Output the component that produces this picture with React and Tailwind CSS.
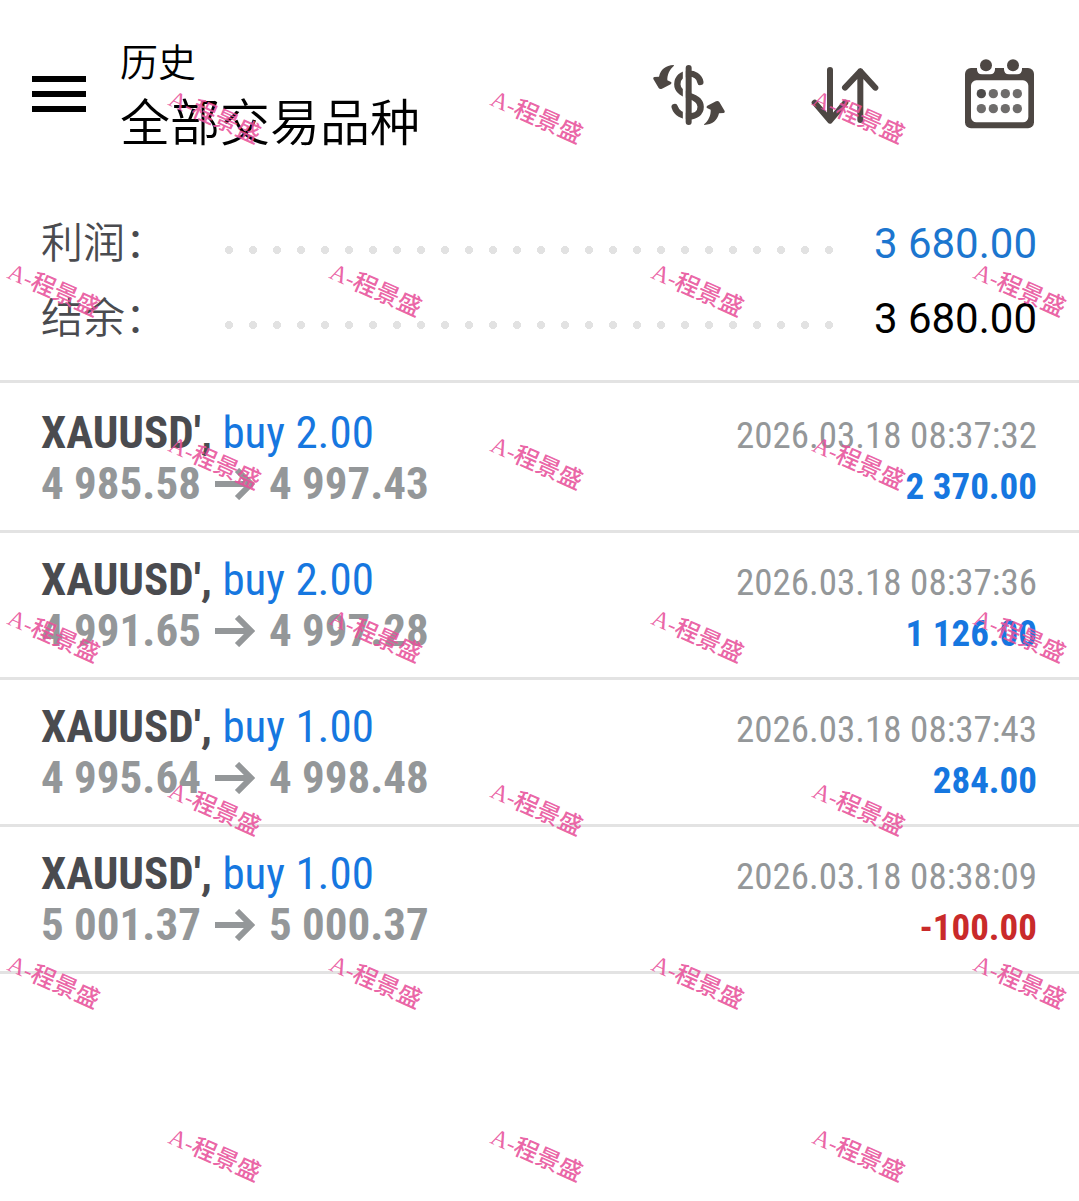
import React from "react";

const summary = [
    { label: "利润", value: "3 680.00", color: "text-[#1c76cf]" },
    { label: "结余", value: "3 680.00", color: "text-black" },
];

const deals = [
    { symbol: "XAUUSD'", side: "buy 2.00", open: "4 985.58", close: "4 997.43", time: "2026.03.18 08:37:32", profit: "2 370.00" },
    { symbol: "XAUUSD'", side: "buy 2.00", open: "4 991.65", close: "4 997.28", time: "2026.03.18 08:37:36", profit: "1 126.00" },
    { symbol: "XAUUSD'", side: "buy 1.00", open: "4 995.64", close: "4 998.48", time: "2026.03.18 08:37:43", profit: "284.00" },
    { symbol: "XAUUSD'", side: "buy 1.00", open: "5 001.37", close: "5 000.37", time: "2026.03.18 08:38:09", profit: "-100.00" },
];

// number of stamps in each row of the watermark
const watermarkRows = [3, 4, 3, 4, 3, 4, 3];

const CurrencyIcon = () => (
    <svg viewBox="6 -12 240 240" className="size-20" fill="none">
        <path d="M157 72 C154 54 138 47 123 47 C102 47 88 60 88 79 C88 98 104 107 123 113 C143 119 158 128 158 146 C158 165 142 175 123 175 C104 175 86 166 80 147" stroke="#4d4743" strokeWidth="19" strokeLinecap="round" />
        <path d="M109 30V190" stroke="#fff" strokeWidth="9" />
        <path d="M122 30V192" stroke="#4d4743" strokeWidth="18" strokeLinecap="round" />
        <path id="swap" d="M77 21 C53 22 38 34 33 56 L19 57 Q14 58 16 63 L32 90 Q36 95 42 92 L68 79 Q73 75 69 72 L58 67 C57 50 65 34 78 23Z" fill="#4d4743" />
        <use href="#swap" transform="rotate(180 123 111)" />
    </svg>
);

const SortIcon = () => (
    <svg viewBox="0 0 240 240" className="size-20" fill="none" stroke="#4d4743" strokeWidth="18" strokeLinecap="round" strokeLinejoin="round">
        <path d="M75 48V199M29 146L75 200L121 146" />
        <path d="M166 198V52M120 101L166 52L211 101" />
    </svg>
);

const CalendarIcon = () => (
    <svg viewBox="0 0 240 240" className="size-20">
        <rect x="15" y="42" width="207" height="181" rx="18" fill="#4d4743" />
        <rect x="33" y="79" width="172" height="126" rx="16" fill="#fff" />
        <path d="M51 34h54v12q0 15-15 15h-24q-15 0-15-15zM132 34h54v12q0 15-15 15h-24q-15 0-15-15z" fill="#fff" />
        <circle cx="78" cy="34" r="18" fill="#4d4743" />
        <circle cx="159" cy="34" r="18" fill="#4d4743" />
        {[119, 164].map((y) =>
            [64, 100, 136, 172].map((x) => (
                <circle key={`${x}-${y}`} cx={x} cy={y} r="14" fill={x === 64 && y === 119 ? "#4d4b4a" : "#6e6c6b"} />
            ))
        )}
    </svg>
);

const PriceArrow = () => (
    <svg viewBox="0 0 40 32" className="w-10 h-8" fill="none" stroke="currentColor" strokeWidth="6">
        <path d="M0 16H36M22 2L36 16L22 30" />
    </svg>
);

const Header = () => (
    <header className="flex items-center justify-between pl-8 pr-[39px] pt-[30px]">
        <div className="flex items-center gap-[34px]">
            <button aria-label="菜单" className="flex flex-col gap-[9px]">
                <span className="w-[54px] h-1.5 bg-black" />
                <span className="w-[54px] h-1.5 bg-black" />
                <span className="w-[54px] h-1.5 bg-black" />
            </button>
            <div className="pt-1.5 font-[350] text-black">
                <p className="text-[38px] leading-[54px]">历史</p>
                <h1 className="text-[50px] leading-[68px]">全部交易品种</h1>
            </div>
        </div>
        <div className="flex gap-[75px]">
            <button aria-label="货币"><CurrencyIcon /></button>
            <button aria-label="排序"><SortIcon /></button>
            <button aria-label="日历"><CalendarIcon /></button>
        </div>
    </header>
);

const DealRow = ({ deal }) => (
    <li className="flex justify-between pl-[41px] pr-[42px] pt-[21px] pb-[18px] border-b-3 border-[#e3e3e3]">
        <div className="text-[45px] leading-[51px]">
            <p>
                <span className="font-bold text-[#4a4b4f]">{deal.symbol},</span>{" "}
                <span className="text-[#1677e0]">{deal.side}</span>
            </p>
            <p className="flex items-center gap-3.5 font-bold text-[#949799]">
                {deal.open} <PriceArrow /> {deal.close}
            </p>
        </div>
        <div className="text-right text-[37px] leading-[51px] pt-[3px]">
            <p className="text-[#949799]">{deal.time}</p>
            <p className={`font-bold ${deal.profit.startsWith("-") ? "text-[#c92a2a]" : "text-[#1677e0]"}`}>{deal.profit}</p>
        </div>
    </li>
);

const Watermark = () => (
    <div className="absolute inset-0 overflow-hidden pointer-events-none" aria-hidden="true">
        {watermarkRows.map((count, row) => (
            <div key={row} className="flex h-[173px] w-max pt-[103px] odd:ml-[54px] even:ml-[-107px]">
                {Array.from({ length: count }, (_, col) => (
                    <div key={col} className="w-[322px] flex justify-center">
                        <span className="h-7 rotate-24 whitespace-nowrap text-[24px] leading-7 font-medium text-[#e8529b]/90 font-['Liberation_Serif','Noto_Sans_CJK_SC',serif]">
                            A-程景盛
                        </span>
                    </div>
                ))}
            </div>
        ))}
    </div>
);

export default function App() {
    return (
        <div className="relative min-h-screen overflow-hidden bg-white font-['Roboto','Noto_Sans_CJK_SC',sans-serif]">
            <Header />
            <dl className="pl-[41px] pr-[42px] pt-12 pb-6 text-[42px] leading-[75px] border-b-3 border-[#e3e3e3]">
                {summary.map((item) => (
                    <div key={item.label} className="flex items-center">
                        <dt className="w-44 font-[350] text-[#4a4b4f]">{item.label}：</dt>
                        <dd className="flex-1 flex items-center">
                            <span className="flex-1 h-2 mt-3 mr-8 bg-[radial-gradient(circle,#e2e2e2_4px,transparent_4px)] bg-[length:24px_8px]" />
                            <span className={item.color}>{item.value}</span>
                        </dd>
                    </div>
                ))}
            </dl>
            <ul className="pt-[3px] font-['Roboto_Condensed','Liberation_Sans_Narrow','Noto_Sans_CJK_SC',sans-serif]">
                {deals.map((deal) => (
                    <DealRow key={deal.time} deal={deal} />
                ))}
            </ul>
            <Watermark />
        </div>
    );
}
